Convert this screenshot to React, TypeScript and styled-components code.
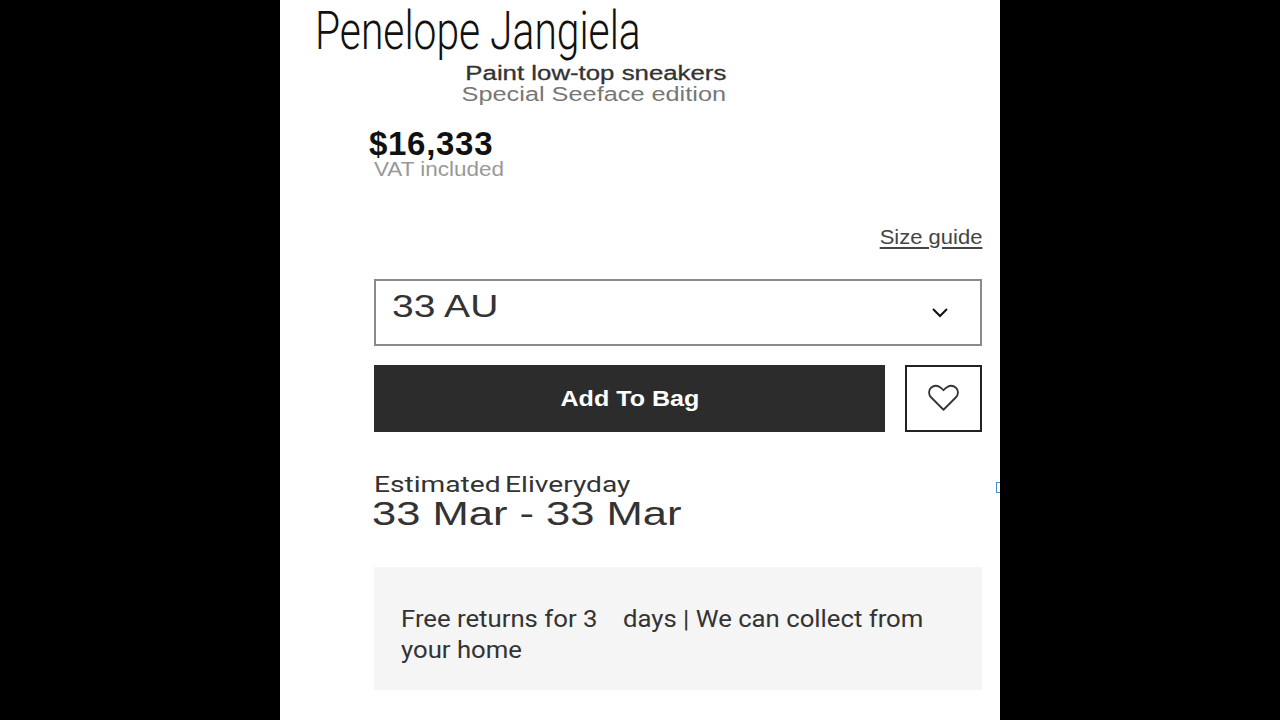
import React from "react";
import styled, { createGlobalStyle } from "styled-components";

const Global = createGlobalStyle`
  html, body { margin: 0; height: 100%; background: #000; overflow: hidden; }
  #root { height: 100%; }
`;
const Page = styled.div`
  width: 1280px; height: 720px; display: flex; justify-content: center; background: #000;
  font-family: "Liberation Sans", Arial, sans-serif;
`;
const Panel = styled.main`
  position: relative; width: 720px; height: 720px; background: #fff; overflow: hidden;
  box-sizing: border-box; padding: 0 18px 0 94px;
  display: flex; flex-direction: column;
`;
const Stretch = styled.span<{ $sx: number; $origin?: string }>`
  display: inline-block; white-space: nowrap;
  transform: scaleX(${p => p.$sx}); transform-origin: ${p => p.$origin ?? "left"} center;
`;
const Title = styled.h1`
  margin: 2px 0 0 -59px; height: 58px; font-family: Roboto, "Liberation Sans", sans-serif;
  font-size: 54px; line-height: 58px; font-weight: 300; color: #111;
`;
const SubBlock = styled.div`
  width: 352px; margin-top: 2px; text-align: right;
`;
const SubName = styled.div`
  font-size: 20px; line-height: 22px; color: #333; height: 22px; -webkit-text-stroke: 0.3px #333;
`;
const SubEdition = styled.div`
  font-size: 20px; line-height: 20px; color: #777; height: 22px;
`;
const Price = styled.div`
  margin: 22px 0 0 -5px; font-size: 33px; line-height: 31px; font-weight: 700; color: #111; height: 31px;
  letter-spacing: 0.7px;
`;
const Vat = styled.div`
  font-size: 20px; line-height: 20px; color: #999; height: 20px;
`;
const SizeRow = styled.div`
  display: flex; justify-content: flex-end; margin-top: 46px; height: 24px;
`;
const SizeLink = styled.a`
  display: inline-block; white-space: nowrap; transform: scaleX(1.1); transform-origin: right center;
  font-size: 20px; line-height: 24px; color: #444; text-decoration: underline; text-underline-offset: 3px;
`;
const Select = styled.div`
  margin-top: 30px; height: 67px; box-sizing: border-box; border: 2px solid #8a8a8a;
  display: flex; justify-content: space-between; padding: 0 30px 0 16px; color: #333;
`;
const SelectValue = styled.span`
  font-size: 32px; line-height: 50px;
`;
const Chevron = styled.svg`
  width: 20px; height: 20px; margin-top: 21px; fill: none; stroke: #111; stroke-width: 2;
`;
const Actions = styled.div`
  display: flex; gap: 20px; margin-top: 19px; height: 67px;
`;
const AddButton = styled.button`
  width: 511px; height: 67px; border: 0; background: #2c2c2c; color: #fff; padding: 0;
  font: 700 22px "Liberation Sans", Arial, sans-serif;
`;
const Wish = styled.button`
  width: 77px; height: 67px; box-sizing: border-box; padding: 0 0 2px 0; background: #fff; border: 2px solid #222;
  display: flex; align-items: center; justify-content: center;
`;
const Heart = styled.svg`
  width: 35px; height: 29px; fill: none; stroke: #333; stroke-width: 2; stroke-linejoin: round;
`;
const EstLabel = styled.div`
  margin-top: 41px; font-family: Roboto, "Liberation Sans", sans-serif;
  font-size: 22px; line-height: 24px; height: 23px; color: #333; word-spacing: -2px;
`;
const EstDate = styled.div`
  margin-left: -2px; font-size: 34px; line-height: 34px; height: 34px; color: #333;
`;
const Notice = styled.div`
  margin-top: 37px; height: 123px; box-sizing: border-box; background: #f5f5f5; padding: 37px 27px 0;
  font-family: Roboto, "Liberation Sans", sans-serif; font-size: 23px; line-height: 31px; color: #333;
`;
const Mark = styled.div`
  position: absolute; right: 0; top: 482px; width: 4px; height: 11px; box-sizing: border-box;
  border: 1.5px solid #3f8fd0; border-right: 0;
`;

export default function App() {
  return (
    <Page>
      <Global />
      <Panel>
        <Title><Stretch $sx={0.755}>Penelope Jangiela</Stretch></Title>
        <SubBlock>
          <SubName><Stretch $sx={1.29} $origin="right">Paint low-top sneakers</Stretch></SubName>
          <SubEdition><Stretch $sx={1.265} $origin="right">Special Seeface edition</Stretch></SubEdition>
        </SubBlock>
        <Price>$16,333</Price>
        <Vat><Stretch $sx={1.125}>VAT included</Stretch></Vat>
        <SizeRow><SizeLink>Size guide</SizeLink></SizeRow>
        <Select>
          <SelectValue><Stretch $sx={1.22}>33 AU</Stretch></SelectValue>
          <Chevron viewBox="0 0 20 20"><path d="M3 7l7 7 7-7" /></Chevron>
        </Select>
        <Actions>
          <AddButton><Stretch $sx={1.14} $origin="center">Add To Bag</Stretch></AddButton>
          <Wish>
            <Heart viewBox="0 0 36 32"><path d="M18 29.5 4.5 16C1 12.500 1.500 7.500 4.500 5c3.500-3 8.500-2.500 13.500 3 5-5.500 10-6 13.500-3 3 2.500 3.500 7.500 0 11z" /></Heart>
          </Wish>
        </Actions>
        <EstLabel><Stretch $sx={1.28}>Estimated Eliveryday</Stretch></EstLabel>
        <EstDate><Stretch $sx={1.28}>33 Mar - 33 Mar</Stretch></EstDate>
        <Notice><Stretch $sx={1.118}>Free returns for 3&nbsp;&nbsp;&nbsp;&nbsp;days | We can collect from<br />your home</Stretch></Notice>
        <Mark />
      </Panel>
    </Page>
  );
}
